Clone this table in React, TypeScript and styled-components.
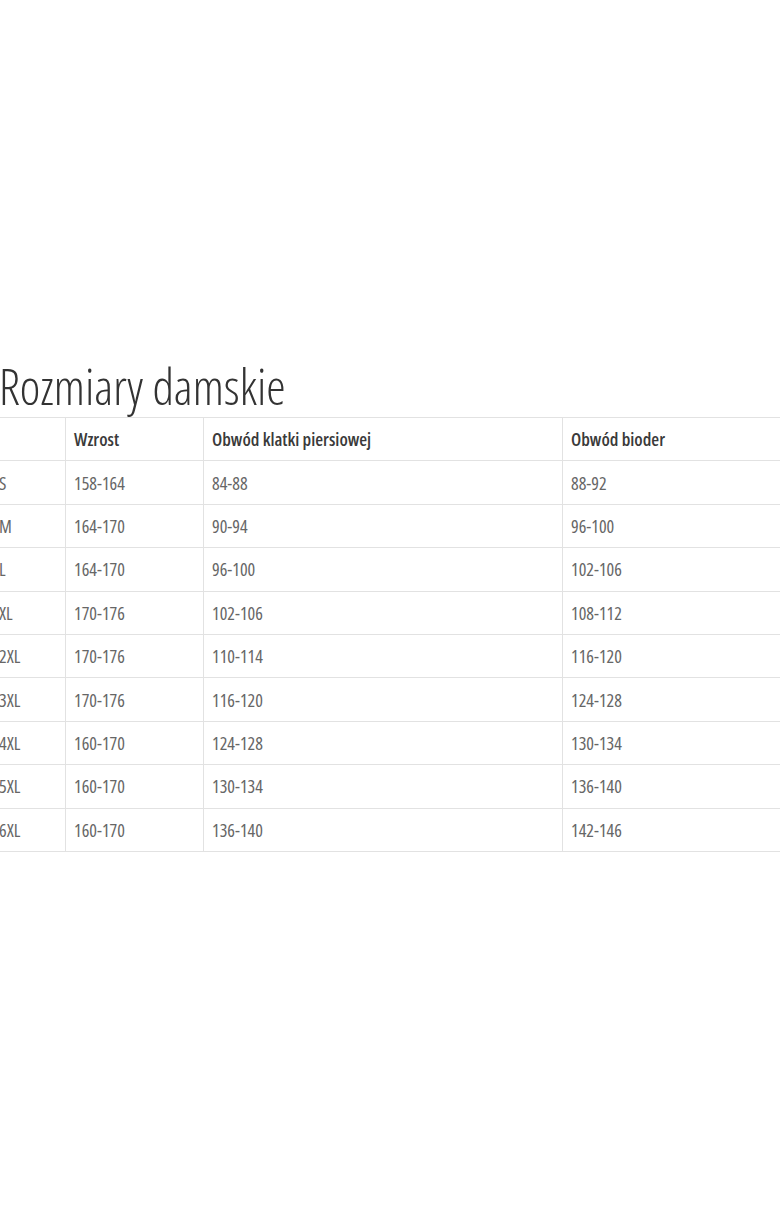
import React from "react";
import styled, { createGlobalStyle } from "styled-components";

const Global = createGlobalStyle`
  html, body { margin: 0; padding: 0; background: #fff; }
  body { font-family: "Open Sans", "Liberation Sans", sans-serif; }
`;

const Page = styled.div`
  width: 780px;
  height: 1213px;
  overflow: hidden;
  box-sizing: border-box;
  padding-top: 361px;
`;

const Section = styled.div`
  margin-left: -10px;
  width: 820px;
`;

const Title = styled.h2`
  margin: 0 0 6px 9px;
  font-family: "Open Sans", sans-serif;
  font-stretch: 75%;
  font-weight: 300;
  font-size: 49px;
  line-height: 50px;
  color: #333;
`;

const Table = styled.table`
  border-collapse: collapse;
  width: 820px;
  table-layout: fixed;
  font-family: "Open Sans", sans-serif;
  font-stretch: 75%;
`;

const Cell = styled.td<{ $head?: boolean }>`
  border: 1px solid #e2e2e2;
  height: 43.4px;
  box-sizing: border-box;
  padding: 0 8px;
  font-size: 18px;
  font-weight: ${(p) => (p.$head ? 600 : 400)};
  color: ${(p) => (p.$head ? "#3a3a3a" : "#666")};
  vertical-align: middle;
  white-space: nowrap;
`;

const rows = [
  ["S", "158-164", "84-88", "88-92"],
  ["M", "164-170", "90-94", "96-100"],
  ["L", "164-170", "96-100", "102-106"],
  ["XL", "170-176", "102-106", "108-112"],
  ["2XL", "170-176", "110-114", "116-120"],
  ["3XL", "170-176", "116-120", "124-128"],
  ["4XL", "160-170", "124-128", "130-134"],
  ["5XL", "160-170", "130-134", "136-140"],
  ["6XL", "160-170", "136-140", "142-146"],
];

export default function App() {
  return (
    <Page>
      <Global />
      <Section>
        <Title>Rozmiary damskie</Title>
        <Table>
          <colgroup>
            <col style={{ width: 75 }} />
            <col style={{ width: 138 }} />
            <col style={{ width: 359 }} />
            <col />
          </colgroup>
          <tbody>
            <tr>
              <Cell $head></Cell>
              <Cell $head>Wzrost</Cell>
              <Cell $head>Obwód klatki piersiowej</Cell>
              <Cell $head>Obwód bioder</Cell>
            </tr>
            {rows.map((r) => (
              <tr key={r[0]}>
                {r.map((c, i) => (
                  <Cell key={i}>{c}</Cell>
                ))}
              </tr>
            ))}
          </tbody>
        </Table>
      </Section>
    </Page>
  );
}
